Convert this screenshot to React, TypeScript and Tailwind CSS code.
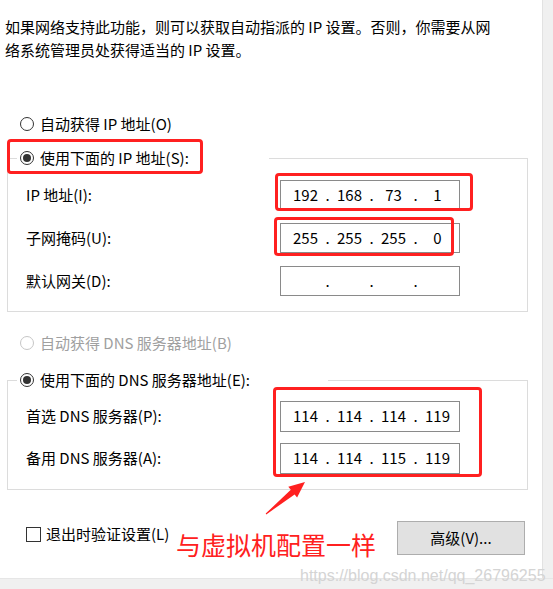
import React from 'react';

const cjk = "font-['Noto_Sans_CJK_SC','Noto_Sans',sans-serif]";

interface RadioProps {
  checked?: boolean;
  disabled?: boolean;
  label: string;
}

const Radio: React.FC<RadioProps> = ({ checked, disabled, label }) => (
  <span className="flex items-center gap-[6px] h-[22px]">
    <span
      className={`w-[14px] h-[14px] rounded-full border bg-white flex items-center justify-center ${
        disabled ? 'border-[#c6c6c6]' : 'border-[#333333]'
      }`}
    >
      {checked && <span className="w-[8px] h-[8px] rounded-full bg-[#333333]" />}
    </span>
    <span className={disabled ? 'text-[#a0a0a0]' : 'text-black'}>{label}</span>
  </span>
);

// IP address box: four octet cells separated by dots
const IpBox: React.FC<{ parts: string[]; h: string }> = ({ parts, h }) => (
  <div className={`w-[180px] ${h} border border-[#8a8a8a] bg-white flex items-center pl-[8px] text-black`}>
    {parts.map((p, i) => (
      <React.Fragment key={i}>
        {i > 0 && <span className="w-[11px] text-center">.</span>}
        <span className="w-[33px] text-center">{p}</span>
      </React.Fragment>
    ))}
  </div>
);

const Row: React.FC<{ label: string; parts: string[]; h: string }> = ({ label, parts, h }) => (
  <div className="flex items-center">
    <span className="w-[254px]">{label}</span>
    <IpBox parts={parts} h={h} />
  </div>
);

const RedBox: React.FC<{ className: string }> = ({ className }) => (
  <div className={`absolute border-[3px] border-[#ff2020] rounded-[4px] ${className}`} />
);

export default function App() {
  return (
    <div className={`relative w-[553px] h-[589px] flex flex-col bg-[#f0f0f0] text-[15px] ${cjk}`}>
      <div className="flex h-[578px]">
        <div className="w-[543px] bg-white border-r border-[#e2e2e2]">
          <p className="pt-[15px] pl-[5px] leading-[23px] text-black">
            如果网络支持此功能，则可以获取自动指派的 IP 设置。否则，你需要从网
            <br />
            络系统管理员处获得适当的 IP 设置。
          </p>

          <div className="mt-[52px] ml-[20px]">
            <Radio label="自动获得 IP 地址(O)" />
          </div>

          {/* IP group */}
          <fieldset className="mt-[12px] ml-[7px] w-[521px] border border-[#dcdcdc] pt-[11px] pb-[15px] pl-[18px]">
            <legend className="-ml-[9px] w-[252px] pl-[3px]">
              <Radio checked label="使用下面的 IP 地址(S):" />
            </legend>
            <div className="flex flex-col gap-[13px]">
              <Row label="IP 地址(I):" parts={['192', '168', '73', '1']} h="h-[30px]" />
              <Row label="子网掩码(U):" parts={['255', '255', '255', '0']} h="h-[30px]" />
              <Row label="默认网关(D):" parts={['', '', '', '']} h="h-[30px]" />
            </div>
          </fieldset>

          <div className="mt-[20px] ml-[20px]">
            <Radio disabled label="自动获得 DNS 服务器地址(B)" />
          </div>

          {/* DNS group */}
          <fieldset className="mt-[15px] ml-[7px] w-[521px] border border-[#dcdcdc] pt-[10px] pb-[15px] pl-[18px]">
            <legend className="-ml-[9px] w-[311px] pl-[3px]">
              <Radio checked label="使用下面的 DNS 服务器地址(E):" />
            </legend>
            <div className="flex flex-col gap-[11px]">
              <Row label="首选 DNS 服务器(P):" parts={['114', '114', '114', '119']} h="h-[31px]" />
              <Row label="备用 DNS 服务器(A):" parts={['114', '114', '115', '119']} h="h-[31px]" />
            </div>
          </fieldset>

          <div className="mt-[31px] flex items-start">
            <label className="ml-[26px] mt-[2px] flex items-center gap-[5px] h-[22px]">
              <span className="w-[15px] h-[15px] border border-[#333333] bg-white" />
              <span>退出时验证设置(L)</span>
            </label>
            <button className="ml-auto mr-[17px] w-[128px] h-[34px] bg-[#e1e1e1] border border-[#adadad] text-black">
              高级(V)...
            </button>
          </div>
        </div>
        <div className="flex-1 bg-[#f0f0f0]" />
      </div>
      <div className="flex-1 bg-[#f0f0f0] border-t border-[#e6e6e6]" />

      {/* annotations */}
      <RedBox className="left-[7px] top-[139px] w-[196px] h-[35px]" />
      <RedBox className="left-[275px] top-[173px] w-[198px] h-[38px]" />
      <RedBox className="left-[274px] top-[217px] w-[180px] h-[39px]" />
      <RedBox className="left-[273px] top-[387px] w-[209px] h-[90px]" />

      <svg className="absolute left-[260px] top-[478px]" width="50" height="40" viewBox="0 0 50 40">
        <polygon
          points="6.3,36.4 34.6,16.4 37.1,19.5 45,4 28.3,8.7 30.8,11.8 5.7,35.6"
          fill="#ff2020"
        />
      </svg>

      <div className="absolute left-[176px] top-[529px] text-[25px] leading-[30px] text-[#ff2020]">
        与虚拟机配置一样
      </div>

      <div className="absolute left-[300px] top-[566px] text-[16px] leading-[20px] text-[#d4d4d4] font-['Liberation_Sans',sans-serif]">
        https://blog.csdn.net/qq_26796255
      </div>
    </div>
  );
}
